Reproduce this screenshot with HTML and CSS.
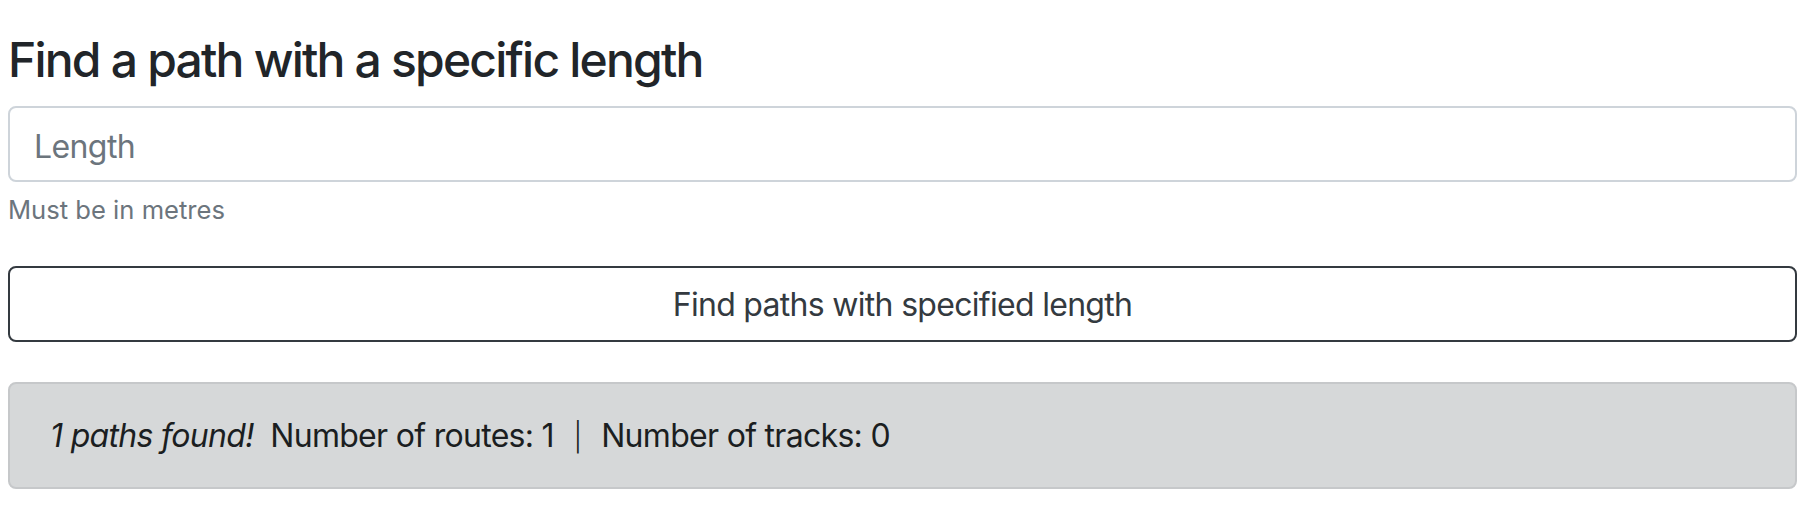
FILE: index.html
```html
<!DOCTYPE html>
<html lang="en">
<head>
<meta charset="utf-8">
<title>Find a path with a specific length</title>
<link rel="stylesheet" href="styles.css">
</head>
<body>
<main class="page">
  <h4 class="title">Find a path with a specific length</h4>
  <div class="form-group">
    <input class="form-control" type="text" placeholder="Length">
    <small class="form-text">Must be in metres</small>
  </div>
  <button class="btn-outline" type="button">Find paths with specified length</button>
  <div class="alert"><em>1 paths found!</em>&nbsp; Number of routes: 1 &nbsp;<span class="sep">|</span>&nbsp; Number of tracks: 0</div>
</main>
</body>
</html>
```

FILE: styles.css
```css
* { box-sizing: border-box; }
html, body { margin: 0; background: #fff; }
body {
  font-family: Inter, "Noto Sans", "Liberation Sans", sans-serif;
  color: #212529;
  font-size: 32px;
  line-height: 1.5;
}
.page {
  padding: 31px 13px 0 8px;
  display: flex;
  flex-direction: column;
}
.title {
  margin: 0 0 17px;
  font-size: 48px;
  line-height: 1.2;
  font-weight: 500;
  letter-spacing: -1.8px;
  color: #212529;
}
.form-group {
  display: flex;
  flex-direction: column;
  margin-bottom: 37px;
}
.form-control {
  height: 76px;
  padding: 15px 24px 9px;
  font: inherit;
  font-size: 32px;
  letter-spacing: -0.6px;
  color: #495057;
  border: 2px solid #ced4da;
  border-radius: 8px;
  background: #fff;
  outline: none;
}
.form-control::placeholder { color: #6c757d; opacity: 1; }
.form-text {
  margin-top: 9px;
  font-size: 25.6px;
  line-height: 1.5;
  color: #6c757d;
}
.btn-outline {
  height: 76px;
  width: 100%;
  padding: 13px 24px 11px;
  font: inherit;
  font-size: 32px;
  letter-spacing: -0.7px;
  color: #343a40;
  background: #fff;
  border: 2px solid #343a40;
  border-radius: 8px;
  text-align: center;
}
.alert {
  margin-top: 40px;
  padding: 28px 40px 27px;
  background: #d6d8d9;
  border: 2px solid #c6c8ca;
  border-radius: 8px;
  color: #1b1e21;
  font-size: 32px;
  line-height: 1.5;
  letter-spacing: -0.7px;
}
.sep {
  margin: 0 3px;
  font-size: 28px;
  font-weight: 300;
}
```
